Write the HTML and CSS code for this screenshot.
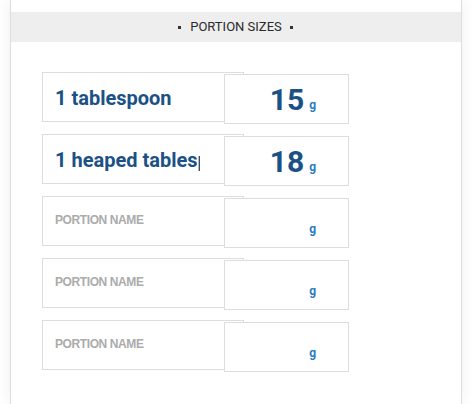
FILE: index.html
```html
<!DOCTYPE html>
<html>
<head>
<meta charset="utf-8">
<link rel="stylesheet" href="styles.css">
</head>
<body>
<div class="card">
  <div class="band"><span class="dot"></span>PORTION SIZES<span class="dot"></span></div>
  <div class="rows">
    <div class="row">
      <div class="name"><span class="val">1 tablespoon</span></div>
      <div class="qty"><span class="num">15</span><span class="unit">g</span></div>
    </div>
    <div class="row">
      <div class="name"><span class="val">1 heaped tablespoon</span></div>
      <div class="qty"><span class="num">18</span><span class="unit">g</span></div>
    </div>
    <div class="row">
      <div class="name"><span class="ph">PORTION NAME</span></div>
      <div class="qty"><span class="num"></span><span class="unit">g</span></div>
    </div>
    <div class="row">
      <div class="name"><span class="ph">PORTION NAME</span></div>
      <div class="qty"><span class="num"></span><span class="unit">g</span></div>
    </div>
    <div class="row">
      <div class="name"><span class="ph">PORTION NAME</span></div>
      <div class="qty"><span class="num"></span><span class="unit">g</span></div>
    </div>
  </div>
</div>
</body>
</html>
```

FILE: styles.css
```css
html, body {
  margin: 0;
  padding: 0;
  background: #ffffff;
  overflow: hidden;
}
body {
  font-family: Roboto, "Liberation Sans", sans-serif;
  height: 404px;
}
.card {
  box-sizing: border-box;
  margin-left: 10px;
  width: 452px;
  height: 404px;
  background: #ffffff;
  border-left: 1px solid #dddddd;
  border-right: 1px solid #dddddd;
  box-shadow: 0 0 14px rgba(0, 0, 0, 0.07);
  padding-top: 12px;
}
.band {
  height: 30px;
  background: #eeeeee;
  display: flex;
  align-items: center;
  justify-content: center;
  font-size: 13px;
  color: #2b2b2b;
  line-height: 30px;
}
.dot {
  display: inline-block;
  width: 3px;
  height: 3px;
  background: #333333;
  margin: 0 9px 0 8px;
}
.rows {
  padding: 30px 0 0 31px;
  display: flex;
  flex-direction: column;
  gap: 10px;
}
.row {
  display: flex;
  align-items: flex-start;
}
.name {
  box-sizing: border-box;
  width: 202px;
  height: 50px;
  border: 1px solid #dddddd;
  background: #ffffff;
  padding: 0 43px 0 12px;
  overflow: hidden;
  white-space: nowrap;
}
.val {
  display: block;
  overflow: hidden;
  font-size: 20px;
  font-weight: 700;
  color: #1b5185;
  line-height: 24px;
  padding-top: 13px;
}
.ph {
  display: block;
  font-family: "Liberation Sans", Arial, sans-serif;
  font-size: 12px;
  font-weight: 700;
  color: #ababab;
  letter-spacing: -0.4px;
  line-height: 14px;
  padding-top: 16px;
}
.qty {
  box-sizing: border-box;
  width: 125px;
  height: 50px;
  margin-top: 2px;
  margin-left: -20px;
  border: 1px solid #dddddd;
  background: #ffffff;
  text-align: right;
  padding: 7px 32px 0 0;
  font-size: 30px;
  line-height: 35px;
  white-space: nowrap;
}
.num {
  font-weight: 700;
  color: #1b5185;
}
.unit {
  font-size: 12px;
  font-weight: 700;
  color: #2a7bc2;
  margin-left: 5px;
  vertical-align: 1px;
}
```
